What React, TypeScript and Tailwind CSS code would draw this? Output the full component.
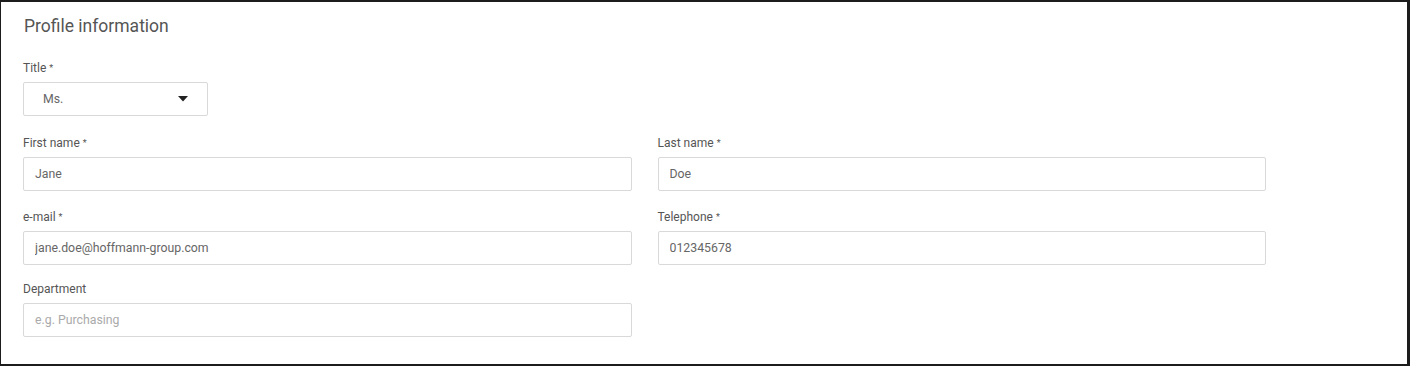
import React from "react";

type FieldProps = {
  label: string;
  value?: string;
  placeholder?: string;
  required?: boolean;
};

function Label({ text, required }: { text: string; required?: boolean }) {
  return (
    <div className="text-[12px] leading-[16px] text-[#555] mb-[6px] h-[16px]">
      {text}
      {required && <sup className="text-[9px] ml-[3px] relative top-[-1px]">*</sup>}
    </div>
  );
}

function Field({ label, value, placeholder, required }: FieldProps) {
  return (
    <div>
      <Label text={label} required={required} />
      <input
        readOnly
        value={value ?? ""}
        placeholder={placeholder}
        className="block w-full h-[34px] border border-[#d9d9d9] rounded-[2px] bg-white px-[11px] text-[12.3px] text-[#666] placeholder:text-[#aaa] outline-none"
      />
    </div>
  );
}

export default function App() {
  return (
    <div
      className="w-[1410px] h-[366px] bg-white border-t-2 border-l border-r-[3px] border-b-2 border-[#1c1c1c] overflow-hidden"
      style={{ fontFamily: "Roboto, 'Liberation Sans', sans-serif" }}
    >
      <div className="pl-[22px] pt-[13px]">
        <h2 className="text-[17.5px] leading-[22px] text-[#555] ml-[1px]">Profile information</h2>

        <div className="mt-[23px] w-[1243px] flex flex-col">
          <div>
            <Label text="Title" required />
            <div className="w-[185px] h-[34px] border border-[#d9d9d9] rounded-[2px] flex items-center justify-between pl-[19px] pr-[19px] text-[12.3px] text-[#666]">
              <span>Ms.</span>
              <svg width="10" height="6" viewBox="0 0 10 6">
                <path d="M0 0 L10 0 L5 5.5 Z" fill="#222" />
              </svg>
            </div>
          </div>

          <div className="grid grid-cols-2 gap-x-[26px] mt-[19px]">
            <Field label="First name" value="Jane" required />
            <Field label="Last name" value="Doe" required />
          </div>

          <div className="grid grid-cols-2 gap-x-[26px] mt-[18px]">
            <Field label="e-mail" value="jane.doe@hoffmann-group.com" required />
            <Field label="Telephone" value="012345678" required />
          </div>

          <div className="grid grid-cols-2 gap-x-[26px] mt-[16px]">
            <Field label="Department" placeholder="e.g. Purchasing" />
          </div>
        </div>
      </div>
    </div>
  );
}
